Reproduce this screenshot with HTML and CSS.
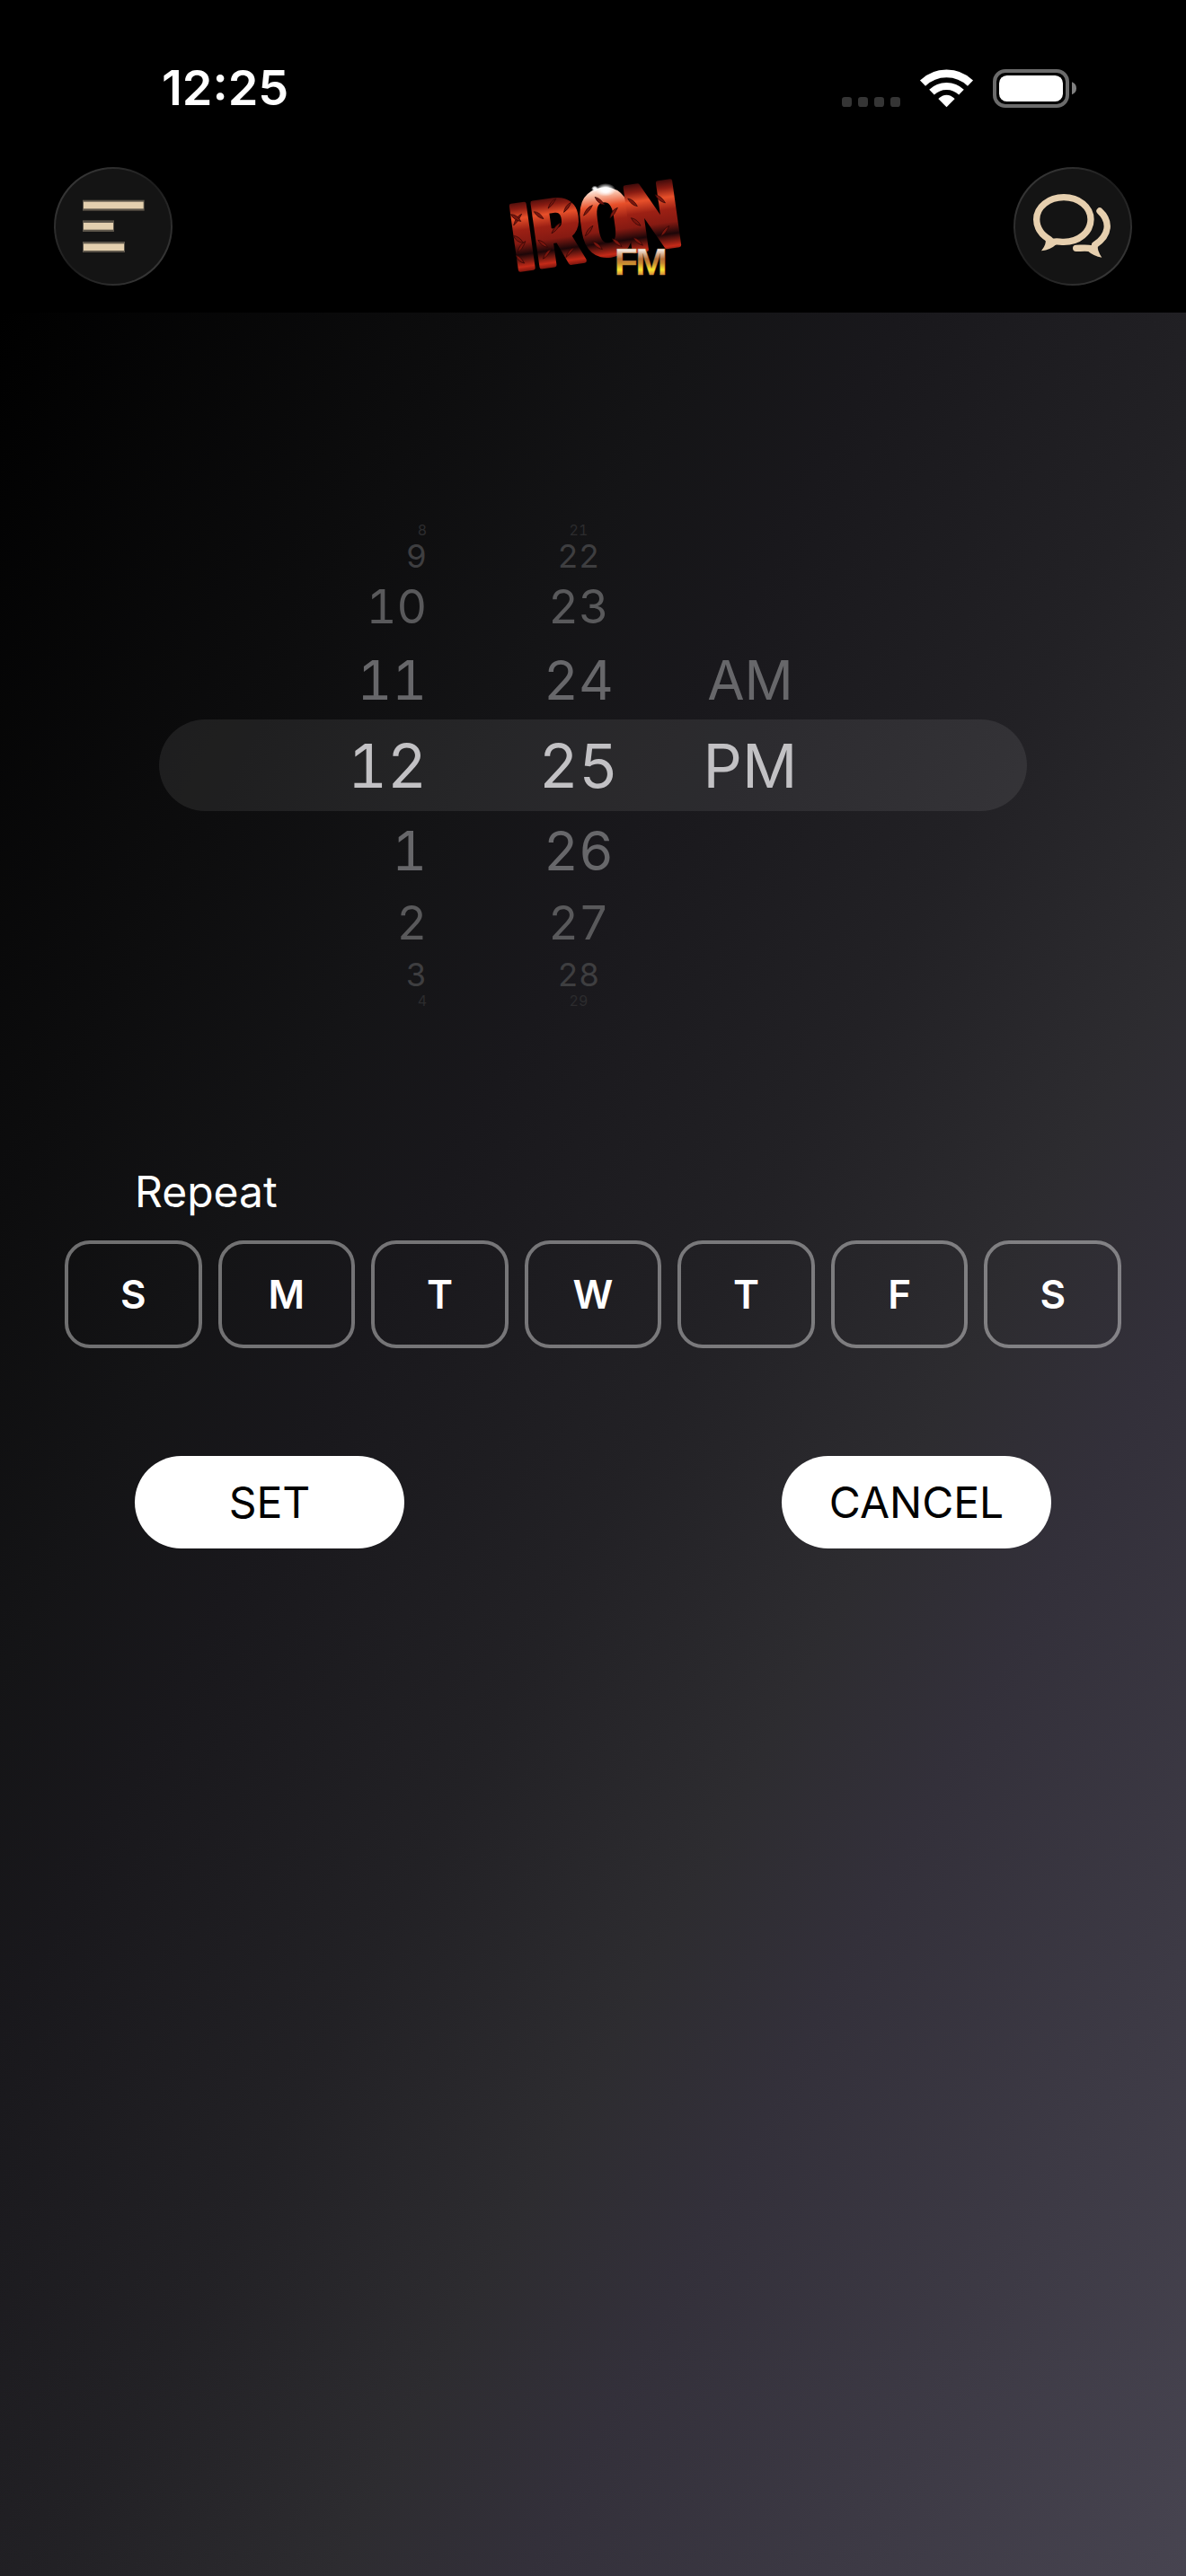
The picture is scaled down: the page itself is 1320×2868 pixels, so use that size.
FILE: index.html
```html
<!DOCTYPE html>
<html lang="en">
<head>
<meta charset="utf-8">
<meta name="viewport" content="width=device-width, initial-scale=1">
<title>Iron FM – Alarm</title>
<link rel="stylesheet" href="styles.css">
</head>
<body>
<div class="screen">
  <header class="top">
    <div class="status">
      <time class="clock">12:25</time>
      <svg class="status-icons" viewBox="111 75 783 129" aria-hidden="true">
        <g fill="#353535">
          <rect x="111" y="168" width="33" height="33" rx="10"/>
          <rect x="165" y="168" width="33" height="33" rx="10"/>
          <rect x="219" y="168" width="33" height="33" rx="10"/>
          <rect x="273" y="168" width="33" height="33" rx="10"/>
        </g>
        <g fill="none" stroke="#fff">
          <path stroke-width="26" d="M381 122A114 114 0 0 1 540 122"/>
          <path stroke-width="24" d="M411 152A71 71 0 0 1 510 152"/>
        </g>
        <path fill="#fff" d="M460.500 202L433 174Q446 161 460.500 161T488 174Z"/>
        <rect x="621" y="81" width="243" height="117" rx="36" fill="none" stroke="#6b6b6b" stroke-width="12"/>
        <rect x="636" y="96" width="213" height="87" rx="26" fill="#fff"/>
        <path fill="#808080" d="M879 118Q894 124 894 139T879 160Z"/>
      </svg>
    </div>
    <div class="toolbar">
      <button class="round" type="button" aria-label="Menu">
        <svg viewBox="60 78 396 396" aria-hidden="true">
          <g fill="#e3cfae" fill-opacity=".35">
            <rect x="156" y="188" width="206" height="36"/>
            <rect x="156" y="256" width="105" height="38"/>
            <rect x="156" y="327" width="141" height="36"/>
          </g>
          <g fill="#e3cfae">
            <rect x="159" y="194" width="200" height="23"/>
            <rect x="159" y="264" width="99" height="23"/>
            <rect x="159" y="334" width="135" height="23"/>
          </g>
        </svg>
      </button>
      <svg class="logo" viewBox="0 18 840 396" role="img" aria-label="Iron FM">
        <defs>
          <linearGradient id="metal" gradientUnits="userSpaceOnUse" x1="0" y1="-232" x2="0" y2="8">
            <stop offset="0" stop-color="#3c0a0a"/>
            <stop offset=".12" stop-color="#8a1c12"/>
            <stop offset=".25" stop-color="#e8502a"/>
            <stop offset=".42" stop-color="#9c2014"/>
            <stop offset=".6" stop-color="#861a12"/>
            <stop offset=".76" stop-color="#1c0608"/>
            <stop offset=".93" stop-color="#c42a18"/>
            <stop offset="1" stop-color="#7a150e"/>
          </linearGradient>
          <linearGradient id="shine" gradientUnits="userSpaceOnUse" x1="0" y1="-232" x2="0" y2="8">
            <stop offset="0" stop-color="#fff4ee"/>
            <stop offset=".1" stop-color="#f7b49a"/>
            <stop offset=".25" stop-color="#e8502a"/>
            <stop offset=".45" stop-color="#9c2014"/>
            <stop offset=".6" stop-color="#861a12"/>
            <stop offset=".76" stop-color="#1c0608"/>
            <stop offset=".93" stop-color="#c42a18"/>
            <stop offset="1" stop-color="#7a150e"/>
          </linearGradient>
          <linearGradient id="gold" x1="0" y1="0" x2="0" y2="1">
            <stop offset=".2" stop-color="#fff"/>
            <stop offset=".45" stop-color="#b87038"/>
            <stop offset=".55" stop-color="#c88a30"/>
            <stop offset=".7" stop-color="#f8e62c"/>
            <stop offset=".82" stop-color="#d98a3c"/>
          </linearGradient>
          <radialGradient id="glare">
            <stop offset="0" stop-color="#fff"/>
            <stop offset=".4" stop-color="#fff" stop-opacity=".9"/>
            <stop offset="1" stop-color="#fff" stop-opacity="0"/>
          </radialGradient>
        </defs>
        <g class="iron" transform="translate(158 364) rotate(-8)">
          <text x="0" y="0" fill="url(#metal)" stroke="url(#metal)">I</text>
          <text x="74" y="0" fill="url(#metal)" stroke="url(#metal)">R</text>
          <text x="234" y="-8" fill="url(#shine)" stroke="url(#shine)">O</text>
          <text x="388" y="-8" fill="url(#metal)" stroke="url(#metal)">N</text>
          <g fill="#7a160e" stroke="#2c0606" stroke-width="2">
            <path d="M18 -150Q34 -158 50 -184Q30 -180 18 -150Z"/>
            <path d="M14 -188Q36 -184 44 -160Q22 -166 14 -188Z"/>
            <path d="M20 -60Q36 -66 50 -92Q28 -86 20 -60Z"/>
            <path d="M12 -116Q32 -112 42 -88Q20 -92 12 -116Z"/>
            <path d="M12 -50Q28 -44 36 -20Q16 -26 12 -50Z"/>
            <path d="M92 -186Q112 -182 120 -158Q100 -164 92 -186Z"/>
            <path d="M140 -190Q156 -198 170 -218Q150 -214 140 -190Z"/>
            <path d="M190 -170Q206 -176 220 -200Q198 -194 190 -170Z"/>
            <path d="M92 -90Q112 -84 120 -62Q100 -68 92 -90Z"/>
            <path d="M140 -106Q160 -112 174 -136Q152 -130 140 -106Z"/>
            <path d="M100 -26Q116 -30 130 -54Q108 -48 100 -26Z"/>
            <path d="M176 -20Q192 -28 208 -48Q186 -44 176 -20Z"/>
            <path d="M254 -150Q274 -158 288 -180Q266 -176 254 -150Z"/>
            <path d="M300 -206Q318 -200 328 -176Q306 -182 300 -206Z"/>
            <path d="M340 -130Q356 -136 370 -160Q348 -156 340 -130Z"/>
            <path d="M250 -82Q268 -88 280 -112Q260 -106 250 -82Z"/>
            <path d="M272 -60Q292 -54 300 -30Q280 -36 272 -60Z"/>
            <path d="M338 -60Q358 -54 366 -30Q346 -36 338 -60Z"/>
            <path d="M408 -186Q428 -180 436 -156Q416 -162 408 -186Z"/>
            <path d="M500 -186Q520 -180 530 -154Q508 -162 500 -186Z"/>
            <path d="M410 -120Q430 -114 438 -90Q418 -96 410 -120Z"/>
            <path d="M500 -46Q518 -52 532 -76Q510 -70 500 -46Z"/>
            <path d="M408 -54Q428 -48 436 -24Q416 -32 408 -54Z"/>
          </g>
        </g>
        <ellipse cx="462" cy="94" rx="34" ry="22" fill="url(#glare)"/>
        <ellipse cx="426" cy="90" rx="12" ry="10" fill="url(#glare)"/>
        <text class="fm" y="377" fill="url(#gold)" stroke="#a8743c" stroke-width="1"><tspan x="491">F</tspan><tspan x="562">M</tspan></text>
      </svg>
      <button class="round" type="button" aria-label="Messages">
        <svg viewBox="144 78 396 396" aria-hidden="true">
          <g fill="none" stroke="#e6cfae" stroke-width="22" stroke-linecap="round">
            <path d="M264 320C236 303 221 281 221 253C221 211 262 179 312 179S402 211 402 253S362 328 312 328C298 328 288 325 276 328"/>
            <path d="M432 225C465 255 470 302 416 338"/>
            <path d="M353 349C368 349 382 348 396 349"/>
          </g>
          <path fill="#e6cfae" d="M250 318Q256 334 237 358Q268 354 288 335L276 316Z"/>
          <path fill="#e6cfae" d="M426 340Q422 356 439 380Q412 376 390 357L402 339Z"/>
        </svg>
      </button>
    </div>
  </header>

  <main class="alarm">
    <div class="picker" role="group" aria-label="Alarm time">
      <div class="selection"></div>
      <ul class="wheel hours" role="listbox" aria-label="Hour">
        <li class="far4" role="option">8</li>
        <li class="far3" role="option">9</li>
        <li class="far2" role="option">10</li>
        <li class="far1" role="option">11</li>
        <li class="current" role="option" aria-selected="true">12</li>
        <li class="far1" role="option">1</li>
        <li class="far2" role="option">2</li>
        <li class="far3" role="option">3</li>
        <li class="far4" role="option">4</li>
      </ul>
      <ul class="wheel minutes" role="listbox" aria-label="Minute">
        <li class="far4" role="option">21</li>
        <li class="far3" role="option">22</li>
        <li class="far2" role="option">23</li>
        <li class="far1" role="option">24</li>
        <li class="current" role="option" aria-selected="true">25</li>
        <li class="far1" role="option">26</li>
        <li class="far2" role="option">27</li>
        <li class="far3" role="option">28</li>
        <li class="far4" role="option">29</li>
      </ul>
      <ul class="wheel period" role="listbox" aria-label="AM or PM">
        <li class="far1" role="option">AM</li>
        <li class="current" role="option" aria-selected="true">PM</li>
      </ul>
    </div>

    <h2 class="repeat" id="repeat">Repeat</h2>
    <div class="days" role="group" aria-labelledby="repeat">
      <button type="button" class="day" aria-pressed="false">S</button>
      <button type="button" class="day" aria-pressed="false">M</button>
      <button type="button" class="day" aria-pressed="false">T</button>
      <button type="button" class="day" aria-pressed="false">W</button>
      <button type="button" class="day" aria-pressed="false">T</button>
      <button type="button" class="day" aria-pressed="false">F</button>
      <button type="button" class="day" aria-pressed="false">S</button>
    </div>

    <div class="actions">
      <button type="button" class="pill">SET</button>
      <button type="button" class="pill">CANCEL</button>
    </div>
  </main>
</div>
</body>
</html>
```
FILE: styles.css
```css
* {
  box-sizing: border-box;
}

body {
  margin: 0;
  background: #000;
  color: #fff;
  font-family: Inter, "Liberation Sans", sans-serif;
}

button {
  margin: 0;
  padding: 0;
  border: 0;
  font: inherit;
  color: inherit;
  cursor: pointer;
}

.screen {
  display: flex;
  flex-direction: column;
  min-height: 100vh;
}

/* Status bar and toolbar */

.top {
  padding: 64px 60px 30px;
  background: #000;
}

.status {
  display: flex;
  justify-content: space-between;
  align-items: center;
  padding: 0 62px 0 120px;
  margin-bottom: 54px;
}

.clock {
  font-size: 54px;
  line-height: 68px;
  font-weight: 600;
}

.status-icons {
  width: 261px;
  height: 43px;
}

.toolbar {
  display: flex;
  justify-content: space-between;
  align-items: center;
}

.round {
  width: 132px;
  height: 132px;
  border: 2px solid transparent;
  border-radius: 50%;
  background:
    linear-gradient(#141414, #141414) padding-box,
    linear-gradient(135deg, #404040, #1c1c1c 50%, #404040) border-box;
}

.round svg {
  display: block;
  width: 132px;
  height: 132px;
  margin: -2px;
}

.logo {
  width: 280px;
  height: 132px;
  overflow: visible;
}

.iron {
  font-family: "Roboto Condensed", "Open Sans Condensed", "Noto Sans Condensed", "Liberation Sans", sans-serif;
  font-size: 304px;
  font-weight: 700;
  stroke-width: 14px;
  stroke-linejoin: round;
}

.fm {
  font-family: "Liberation Sans", sans-serif;
  font-size: 128px;
  font-weight: 700;
}

/* Alarm form */

.alarm {
  flex: 1;
  padding: 233px 72px 120px;
  background: linear-gradient(to bottom right, #000 0%, #0d0d0e 20%, #141416 30%, #19181c 38%, #222125 52%, #2d2c30 64%, #33303a 72%, #474450 100%);
}

.picker {
  display: grid;
  grid-template-columns: 11fr 7fr 12fr;
  grid-template-rows: 18px 40px 74px 88px 102px 88px 74px 40px 18px;
  margin: 0 105px;
}

.selection {
  grid-area: 5 / 1 / 6 / 4;
  border-radius: 51px;
  background: rgba(255, 255, 255, 0.08);
}

.wheel {
  display: grid;
  grid-row: 1 / -1;
  grid-template-rows: subgrid;
  align-items: center;
  margin: 0;
  padding: 0;
  list-style: none;
  font-variant-numeric: tabular-nums;
}

.hours {
  grid-column: 1;
  padding-right: 56px;
  text-align: right;
}

.minutes {
  grid-column: 2;
  justify-self: center;
  text-align: center;
}

.period {
  grid-column: 3;
  justify-self: start;
  padding-left: 26px;
  text-align: center;
}

.period .far1 {
  grid-row: 4;
}

.period .current {
  grid-row: 5;
}

.current {
  font-size: 68px;
  line-height: 102px;
  color: #c2c1c4;
}

.far1 {
  font-size: 60px;
  line-height: 88px;
  color: #67676a;
}

.far2 {
  font-size: 52px;
  line-height: 74px;
  color: #59595b;
}

.far3 {
  font-size: 36px;
  line-height: 40px;
  color: #3e3e40;
}

.far4 {
  font-size: 16px;
  line-height: 18px;
  color: #2c2c2e;
}

.repeat {
  margin: 174px 0 24px;
  padding-left: 78px;
  font-size: 48px;
  line-height: 60px;
  font-weight: 400;
}

.days {
  display: grid;
  grid-template-columns: repeat(7, 1fr);
  gap: 18px;
}

.day {
  height: 120px;
  border: 4px solid rgba(255, 255, 255, 0.4);
  border-radius: 28px;
  background: none;
  font-size: 44px;
  font-weight: 600;
}

.actions {
  display: flex;
  justify-content: space-between;
  margin-top: 120px;
  padding: 0 78px;
}

.pill {
  width: 300px;
  height: 103px;
  border-radius: 52px;
  background: #fff;
  color: #000;
  font-size: 48px;
}
```
